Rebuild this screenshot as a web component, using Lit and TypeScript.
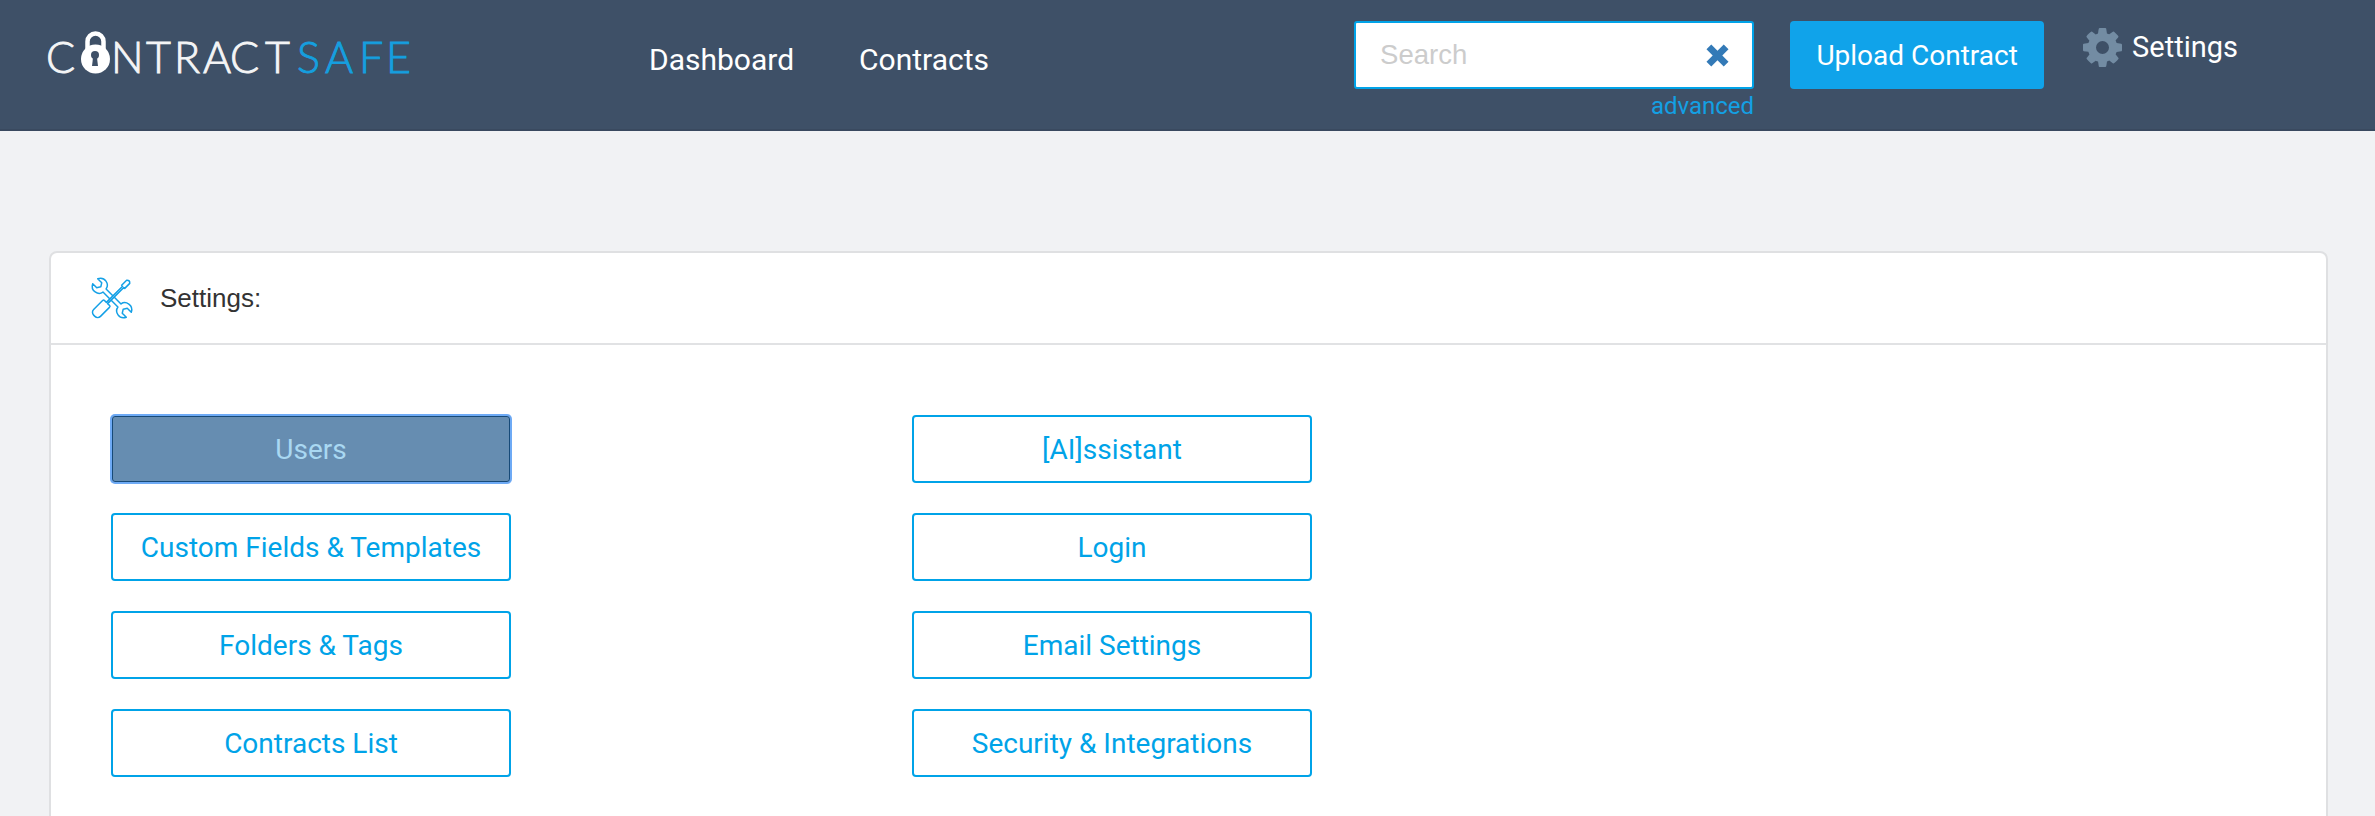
import { LitElement, html, css } from "lit";
import { customElement } from "lit/decorators.js";

const left = ["Users", "Custom Fields & Templates", "Folders & Tags", "Contracts List"];
const right = ["[AI]ssistant", "Login", "Email Settings", "Security & Integrations"];

@customElement("app-root")
export class AppRoot extends LitElement {
  static styles = css`
    :host { display: block; height: 816px; overflow: hidden; background: #f1f2f4; font-family: Roboto, "Liberation Sans", sans-serif; }
    * { box-sizing: border-box; }
    .nav { height: 131px; background: #3e5067; border-bottom: 2px solid #39495f; display: flex; align-items: flex-start; color: #fff; padding-right: 136px; }
    .logo { margin: 30px 0 0 49px; width: 600px; height: 44px; flex: none; }
    .logo svg { display: block; overflow: visible; }
    .links { display: flex; gap: 65px; margin-top: 41px; font-size: 30px; line-height: 38px; }
    .search-col { margin-left: auto; margin-top: 21px; width: 400px; display: flex; flex-direction: column; align-items: flex-end; }
    .search { width: 400px; height: 68px; background: #fff; border: 2px solid #00a3e8; border-radius: 3px; display: flex; align-items: center; justify-content: space-between; padding: 0 23px 0 24px; font-family: "Liberation Sans", Arial, sans-serif; font-size: 27.500px; color: #ccc; }
    .adv { font-size: 24px; color: #13a0e4; line-height: 28px; margin-top: 3px; }
    .upload { margin-left: 36px; margin-top: 21px; width: 254px; height: 68px; background: #10a3ea; border-radius: 4px; color: #fff; font-size: 28px; display: flex; align-items: center; justify-content: center; }
    .set { margin-left: 39px; margin-top: 28px; display: flex; align-items: center; gap: 10px; font-size: 29px; line-height: 38px; height: 39px; margin-right: 1px; }
    .set span { position: relative; top: -1px; }
    .card { margin: 120px 0 0 49px; width: 2279px; height: 700px; background: #fff; border: 2px solid #dfe0e2; border-radius: 8px; }
    .head { height: 92px; border-bottom: 2px solid #e1e2e4; display: flex; align-items: center; padding-left: 39px; gap: 26px; font-family: "Liberation Sans", Arial, sans-serif; font-size: 26px; color: #333; }
    .grid { display: flex; gap: 401px; padding: 70px 0 0 60px; }
    .col { display: flex; flex-direction: column; gap: 30px; }
    .btn { width: 400px; height: 68px; border: 2px solid #00a3e8; border-radius: 4px; color: #00a3e8; font-size: 28px; display: flex; align-items: center; justify-content: center; background: #fff; }
    .btn.active { background: #668db1; color: #a9d8f2; border: 1px solid #6eaaf5; box-shadow: 0 0 0 1px #6eaaf5, inset 0 0 0 1px #174a78; }
    .wm { font-family: Lato, "Open Sans", sans-serif; font-weight: 300; font-size: 43px; stroke-width: 0.900px; }
  `;

  private btn(t: string, active = false) {
    return html`<div class="btn ${active ? "active" : ""}">${t}</div>`;
  }

  render() {
    return html`
      <div class="nav">
        <div class="logo">
          <svg width="360" height="44" viewBox="0 0 360 44">
            <path fill="none" stroke="#fff" stroke-width="4.500" d="M38.500 20V11.500a8 8 0 0 1 16 0V20"/>
            <circle cx="46.500" cy="29" r="14.500" fill="#fff"/>
            <circle cx="46" cy="25" r="4" fill="#3e5067"/>
            <path d="M44.200 26h3.600l1.200 10h-6z" fill="#3e5067"/>
            <text class="wm" y="43" fill="#f4f5f6" stroke="#f4f5f6" x="-3">C</text>
            <text class="wm" y="43" fill="#f4f5f6" stroke="#f4f5f6" x="62 97 125 154 181 216">NTRACT</text>
            <text class="wm" y="43" fill="#159fdf" stroke="#159fdf" x="248 276 310 337">SAFE</text>
          </svg>
        </div>
        <div class="links"><span>Dashboard</span><span>Contracts</span></div>
        <div class="search-col">
          <div class="search"><span>Search</span>
            <svg width="23" height="23" viewBox="0 0 24 24"><path fill="#337ab7" d="M5.500 0.500 12 7l6.500-6.500 5 5L17 12l6.500 6.500-5 5L12 17l-6.500 6.500-5-5L7 12 .5 5.500z"/></svg>
          </div>
          <div class="adv">advanced</div>
        </div>
        <div class="upload">Upload Contract</div>
        <div class="set">
          <svg width="39" height="39" viewBox="128 128 1536 1536"><path fill="#738ca3" d="M1152 896q0-106-75-181t-181-75-181 75-75 181 75 181 181 75 181-75 75-181zm512-109v222q0 12-8 23t-20 13l-185 28q-19 54-39 91 35 50 107 138 10 12 10 25t-9 23q-27 37-99 108t-94 71q-12 0-26-9l-138-108q-44 23-91 38-16 136-29 186-7 28-36 28h-222q-14 0-24.500-8.500t-11.500-21.500l-28-184q-49-16-90-37l-141 107q-10 9-25 9-14 0-25-11-126-114-165-168-7-10-7-23 0-12 8-23 15-21 51-66.500t54-70.500q-27-50-41-99l-183-27q-13-2-21-12.500t-8-23.500v-222q0-12 8-23t19-13l186-28q14-46 39-92-40-57-107-138-10-12-10-24 0-10 9-23 26-36 98.500-107.500t94.500-71.500q13 0 26 10l138 107q44-23 91-38 16-136 29-186 7-28 36-28h222q14 0 24.500 8.500t11.500 21.500l28 184q49 16 90 37l142-107q9-9 24-9 13 0 25 10 129 119 165 170 7 8 7 22 0 12-8 23-15 21-51 66.500t-54 70.500q26 50 41 98l183 28q13 2 21 12.500t8 23.500z"/></svg>
          <span>Settings</span>
        </div>
      </div>
      <div class="card">
        <div class="head">
          <svg width="44" height="44" viewBox="-4 -4 50 50" stroke="#14a0e6" stroke-width="1.700" stroke-linejoin="round" fill="#fff">
            <path transform="translate(21 21) rotate(-45)" d="M-2.500 12V-12C-9-13-12-23-4-27V-20.500L0-18 4-20.500V-27C12-23 9-13 2.500-12V12C9 13 12 23 4 27V20.500L0 18-4 20.500V27C-12 23-9 13-2.500 12Z"/>
            <path transform="translate(21 21) rotate(45)" d="M-1-18H-2.500L-2.500-26Q0-29 2.500-26V-18H1V8H4.500Q5.500 8 5.500 10V24A4.500 4.500 0 0 1 1 28.500H-1A4.500 4.500 0 0 1-5.500 24V10Q-5.500 8-4.500 8H-1Z"/>
          </svg>
          <span>Settings:</span>
        </div>
        <div class="grid">
          <div class="col">${left.map((t, i) => this.btn(t, i === 0))}</div>
          <div class="col">${right.map((t) => this.btn(t))}</div>
        </div>
      </div>
    `;
  }
}
